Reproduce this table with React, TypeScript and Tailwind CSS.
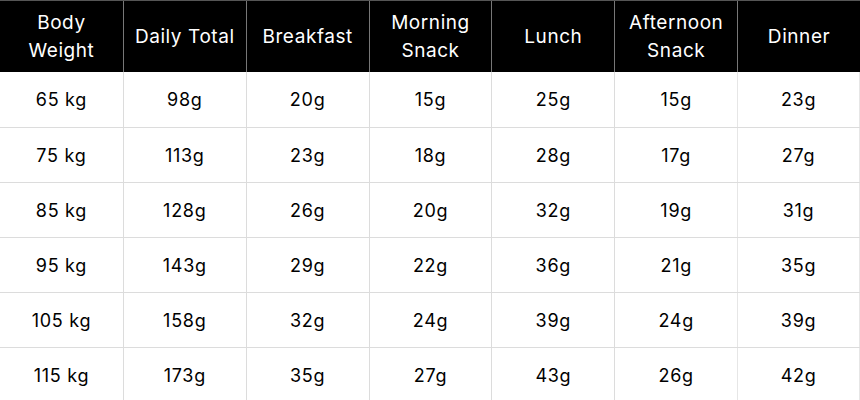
import React from "react";

const headers = [
  ["Body", "Weight"],
  ["Daily Total"],
  ["Breakfast"],
  ["Morning", "Snack"],
  ["Lunch"],
  ["Afternoon", "Snack"],
  ["Dinner"],
];

const rows = [
  ["65 kg", "98g", "20g", "15g", "25g", "15g", "23g"],
  ["75 kg", "113g", "23g", "18g", "28g", "17g", "27g"],
  ["85 kg", "128g", "26g", "20g", "32g", "19g", "31g"],
  ["95 kg", "143g", "29g", "22g", "36g", "21g", "35g"],
  ["105 kg", "158g", "32g", "24g", "39g", "24g", "39g"],
  ["115 kg", "173g", "35g", "27g", "43g", "26g", "42g"],
];

export default function App() {
  return (
    <div
      className="w-[860px] h-[400px] bg-white overflow-hidden"
      style={{ fontFamily: "Inter, 'Noto Sans', sans-serif" }}
    >
      <div className="grid grid-cols-7 h-[72px] bg-black border-t border-[#555]">
        {headers.map((h, i) => (
          <div
            key={i}
            className={`flex flex-col items-center justify-center text-white text-[19px] leading-[28px] tracking-[0.03em] ${
              i > 0 ? "border-l border-[#777]" : ""
            }`}
          >
            {h.map((t) => (
              <span key={t}>{t}</span>
            ))}
          </div>
        ))}
      </div>
      {rows.map((r, ri) => (
        <div
          key={ri}
          className={`grid grid-cols-7 h-[55px] ${ri > 0 ? "border-t border-[#dcdcdc]" : ""}`}
        >
          {r.map((c, ci) => (
            <div
              key={ci}
              className={`flex items-center justify-center text-black text-[18px] tracking-[0.04em] ${
                ci > 0 ? "border-l border-[#dcdcdc]" : ""
              } ${ci === 6 ? "border-r border-[#e6e6e6]" : ""}`}
            >
              {c}
            </div>
          ))}
        </div>
      ))}
    </div>
  );
}
